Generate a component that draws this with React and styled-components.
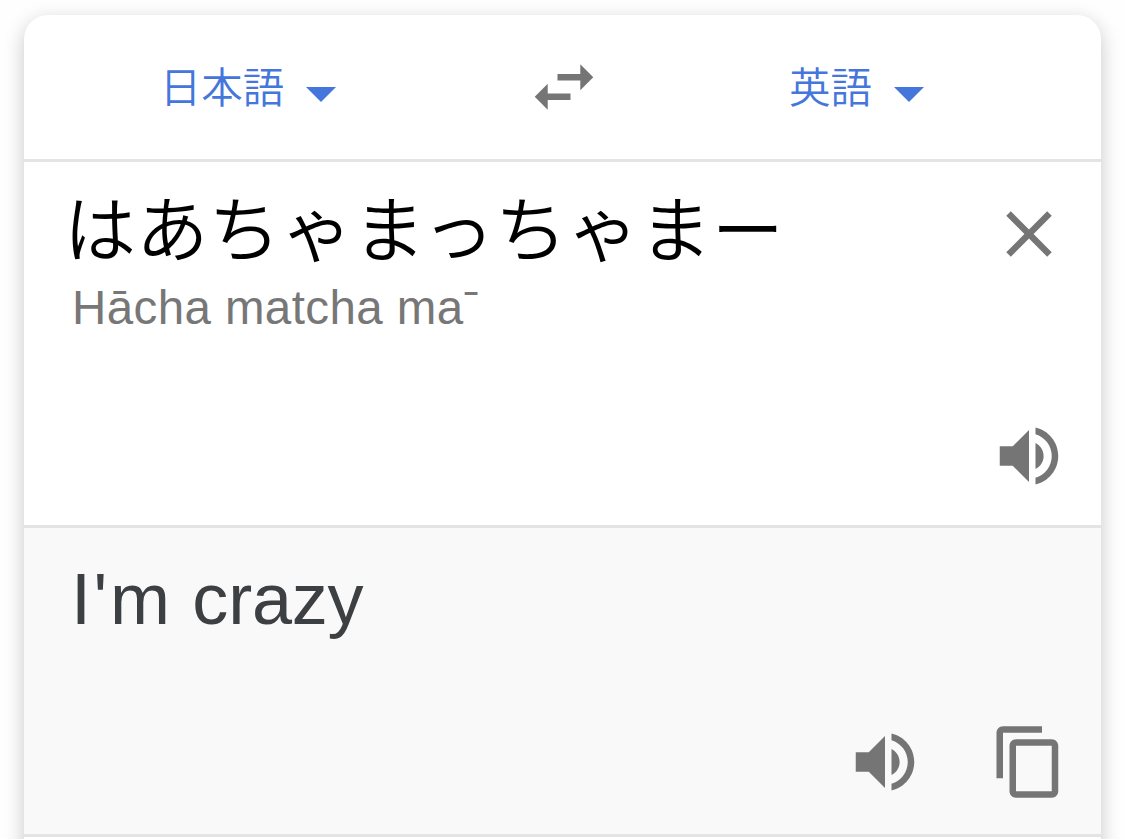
import styled, { createGlobalStyle } from "styled-components";

const SpeakerIcon = () => (
  <Icon viewBox="0 0 24 24">
    <path d="M3 9v6h4l5 5V4L7 9H3zm13.5 3c0-1.77-1.02-3.29-2.5-4.03v8.05c1.48-.73 2.5-2.25 2.5-4.02zM14 3.23v2.06c2.89.86 5 3.54 5 6.71s-2.11 5.85-5 6.71v2.06c4.01-.91 7-4.49 7-8.77s-2.99-7.86-7-8.77z" />
  </Icon>
);

const CloseIcon = () => (
  <Icon viewBox="0 0 24 24">
    <path d="M19 6.41L17.59 5 12 10.59 6.41 5 5 6.41 10.59 12 5 17.59 6.41 19 12 13.41 17.59 19 19 17.59 13.41 12z" />
  </Icon>
);

const SwapIcon = () => (
  <Icon viewBox="0 0 24 24">
    <path d="M6.99 11L3 15l3.99 4v-3H14v-2H6.99v-3zM21 9l-3.99-4v3H10v2h7.01v3L21 9z" />
  </Icon>
);

const CopyIcon = () => (
  <Icon viewBox="0 0 24 24">
    <path d="M16 1H4c-1.1 0-2 .9-2 2v14h2V3h12V1zm3 4H8c-1.1 0-2 .9-2 2v14c0 1.1.9 2 2 2h11c1.1 0 2-.9 2-2V7c0-1.1-.9-2-2-2zm0 16H8V7h11v14z" />
  </Icon>
);

const Language = ({ side, children }) => (
  <LanguageButton $side={side}>
    <LanguageName>{children}</LanguageName>
    <Caret viewBox="0 0 10 5">
      <path d="M0 0l5 5 5-5z" />
    </Caret>
  </LanguageButton>
);

const App = () => {
  return (
    <>
      <GlobalStyle />
      <Page>
        <Card>
          <LanguageBar>
            <Language side="source">日本語</Language>
            <IconButton aria-label="swap">
              <SwapIcon />
            </IconButton>
            <Language side="target">英語</Language>
          </LanguageBar>

          <SourcePanel>
            <SourceRow>
              <div>
                <SourceText>はあちゃまっちゃまー</SourceText>
                <Reading>Hācha matcha maˉ</Reading>
              </div>
              <IconButton aria-label="clear">
                <CloseIcon />
              </IconButton>
            </SourceRow>
            <Actions>
              <IconButton aria-label="listen">
                <SpeakerIcon />
              </IconButton>
            </Actions>
          </SourcePanel>

          <TargetPanel>
            <TargetText>
              <Contraction>I'm</Contraction> crazy
            </TargetText>
            <Actions>
              <IconButton aria-label="listen">
                <SpeakerIcon />
              </IconButton>
              <IconButton aria-label="copy">
                <CopyIcon />
              </IconButton>
            </Actions>
          </TargetPanel>
        </Card>
      </Page>
    </>
  );
};

export default App;

const GlobalStyle = createGlobalStyle`
  * {
    box-sizing: border-box;
  }

  body {
    margin: 0;
    background: #fefefe;
    font-family: "Liberation Sans", "Noto Sans CJK JP", sans-serif;
  }
`;

const Page = styled.main`
  height: 839px;
  padding: 15px 24px 0;
  overflow: hidden;
`;

const Card = styled.div`
  height: 900px;
  background: #fff;
  border-radius: 24px;
  box-shadow: 0 6px 20px rgba(0, 0, 0, 0.22);
`;

const LanguageBar = styled.header`
  display: flex;
  height: 147px;
  padding-top: 33px;
  border-bottom: 3px solid #e4e4e4;
`;

const LanguageButton = styled.button`
  flex: none;
  display: flex;
  align-items: center;
  justify-content: center;
  gap: 22px;
  width: ${props => (props.$side === "source" ? "501px" : "498px")};
  height: 78px;
  padding: ${props => (props.$side === "source" ? "0 53px 0 0" : "0 0 0 9px")};
  border: none;
  background: none;
  color: #4476dc;
  font-family: "Noto Sans CJK JP DemiLight", "Noto Sans CJK JP", sans-serif;
  font-size: 41.5px;
  font-weight: 350;
`;

const LanguageName = styled.span`
  margin-bottom: 4px;
`;

const Caret = styled.svg`
  width: 30px;
  height: 15px;
  margin-top: 15px;
  fill: currentColor;
`;

const IconButton = styled.button`
  flex: none;
  width: 78px;
  height: 78px;
  padding: 0;
  border: none;
  background: none;
  color: #757575;
`;

const Icon = styled.svg`
  display: block;
  width: 78px;
  height: 78px;
  fill: currentColor;
`;

const SourcePanel = styled.section`
  display: flex;
  flex-direction: column;
  justify-content: space-between;
  height: 366px;
  padding: 33px 33px 30px 40px;
  border-bottom: 3px solid #e4e4e4;
`;

const SourceRow = styled.div`
  display: flex;
  justify-content: space-between;
`;

const SourceText = styled.div`
  margin-top: -6px;
  color: #000;
  font-family: "Noto Sans CJK JP DemiLight", "Noto Sans CJK JP", sans-serif;
  font-size: 72px;
  font-weight: 350;
  line-height: 72px;
  letter-spacing: 0.3px;
  white-space: nowrap;
`;

const Reading = styled.div`
  margin-top: 20px;
  padding-left: 8px;
  color: #777;
  font-size: 47.5px;
  line-height: 54px;
  letter-spacing: 0.4px;
  white-space: nowrap;
`;

const Actions = styled.div`
  display: flex;
  justify-content: flex-end;
  gap: 66px;
`;

const TargetPanel = styled.section`
  display: flex;
  flex-direction: column;
  justify-content: space-between;
  height: 309px;
  padding: 31px 33px 33px 47px;
  border-bottom: 3px solid #e4e4e4;
  background: #f9f9f9;
`;

const TargetText = styled.div`
  color: #3c4043;
  font-size: 72px;
  line-height: 80px;
  letter-spacing: -0.2px;
`;

const Contraction = styled.span`
  letter-spacing: 2.6px;
`;
